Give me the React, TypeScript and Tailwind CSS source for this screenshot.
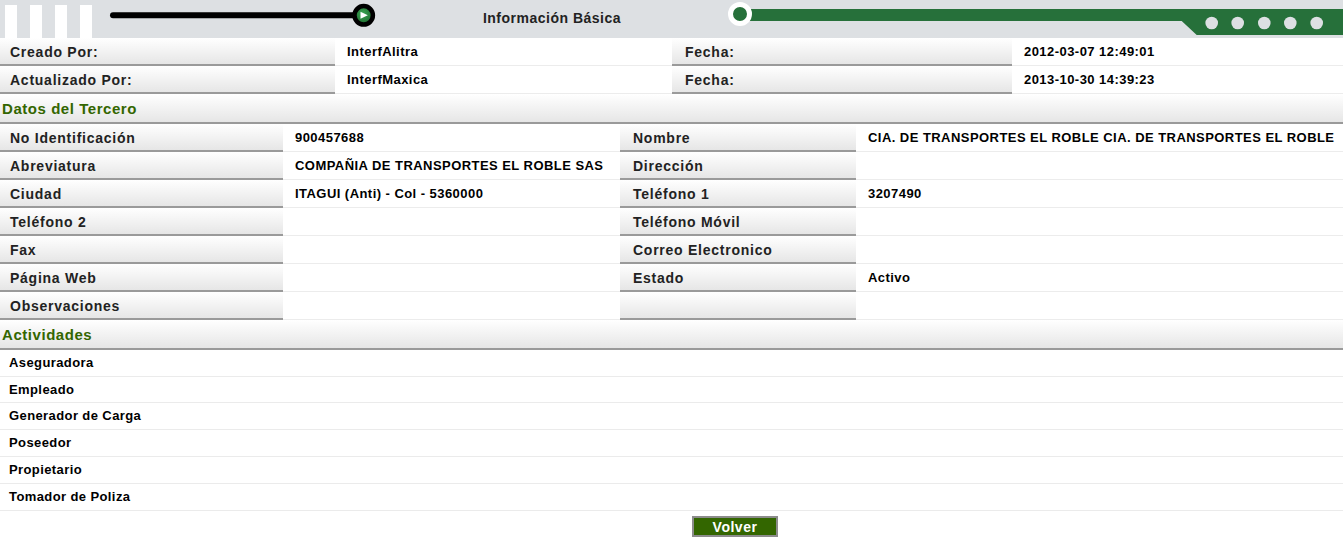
import React from 'react';

const font = { fontFamily: '"Liberation Sans", Arial, sans-serif' };

const labelCls =
  'flex h-[28px] items-center border-b-2 border-[#9a9a9a] bg-gradient-to-b from-white to-[#e6e6e6] pt-[2px] text-[14px] font-bold tracking-[0.75px] text-[#222]';
const valueCls =
  'h-[28px] border-b border-[#ececec] pl-[12px] pt-[6px] text-[13px] leading-[15px] font-bold tracking-[0.45px] text-black';
const sectionCls =
  'flex h-[30px] items-center border-b-2 border-[#9a9a9a] bg-gradient-to-b from-white to-[#e6e6e6] pl-[2px] pt-[2px] text-[15px] font-bold tracking-[0.55px] text-[#336600]';

function Header() {
  return (
    <div className="flex h-[38px] bg-[#dde0e3]">
      <div className="flex gap-[13px] pl-[5px] pt-[5px]">
        <div className="h-[33px] w-[12px] bg-white" />
        <div className="h-[33px] w-[12px] bg-white" />
        <div className="h-[33px] w-[12px] bg-white" />
        <div className="h-[33px] w-[12px] bg-white" />
      </div>
      <svg width="284" height="38" viewBox="0 0 284 38" className="shrink-0">
        <line x1="21" y1="15.3" x2="268" y2="15.3" stroke="#000" strokeWidth="6" strokeLinecap="round" />
        <defs>
          <radialGradient id="knob" cx="0.45" cy="0.4" r="0.6">
            <stop offset="0" stopColor="#3aa452" />
            <stop offset="1" stopColor="#1d6a2e" />
          </radialGradient>
        </defs>
        <circle cx="271.7" cy="15.3" r="9.2" fill="url(#knob)" stroke="#000" strokeWidth="4.5" />
        <polygon points="268.5,11.8 275.8,15.3 268.5,18.8" fill="#fff" />
      </svg>
      <div className="flex flex-1 items-center justify-center pb-[1px] text-[14px] font-bold tracking-[0.5px] text-[#222]">
        Información Básica
      </div>
      <svg width="615" height="38" viewBox="0 0 615 38" className="shrink-0">
        <polygon points="12,9 615,9 615,35 468.7,35 453.7,21 12,21" fill="#26703a" />
        <circle cx="12" cy="14" r="9.5" fill="#26703a" stroke="#fff" strokeWidth="5" />
        {[483.7, 509.7, 536.3, 562.3, 588.7].map((x) => (
          <circle key={x} cx={x} cy="23" r="6.3" fill="#dde0e3" />
        ))}
      </svg>
    </div>
  );
}

const audit = [
  ['Creado Por:', 'InterfAlitra', 'Fecha:', '2012-03-07 12:49:01'],
  ['Actualizado Por:', 'InterfMaxica', 'Fecha:', '2013-10-30 14:39:23'],
];

const tercero = [
  ['No Identificación', '900457688', 'Nombre', 'CIA. DE TRANSPORTES EL ROBLE CIA. DE TRANSPORTES EL ROBLE'],
  ['Abreviatura', 'COMPAÑIA DE TRANSPORTES EL ROBLE SAS', 'Dirección', ''],
  ['Ciudad', 'ITAGUI (Anti) - Col - 5360000', 'Teléfono 1', '3207490'],
  ['Teléfono 2', '', 'Teléfono Móvil', ''],
  ['Fax', '', 'Correo Electronico', ''],
  ['Página Web', '', 'Estado', 'Activo'],
  ['Observaciones', '', '', ''],
];

const actividades = [
  { name: 'Aseguradora', h: 'h-[27px]' },
  { name: 'Empleado', h: 'h-[26px]' },
  { name: 'Generador de Carga', h: 'h-[27px]' },
  { name: 'Poseedor', h: 'h-[27px]' },
  { name: 'Propietario', h: 'h-[27px]' },
  { name: 'Tomador de Poliza', h: 'h-[27px]' },
];

export default function App() {
  return (
    <div className="w-full bg-white" style={font}>
      <Header />

      <div className="grid grid-cols-[335px_337px_340px_1fr]">
        {audit.map(([l1, v1, l2, v2]) => (
          <React.Fragment key={l1}>
            <div className={`${labelCls} pl-[10px]`}>{l1}</div>
            <div className={valueCls}>{v1}</div>
            <div className={`${labelCls} pl-[13px]`}>{l2}</div>
            <div className={valueCls}>{v2}</div>
          </React.Fragment>
        ))}
      </div>

      <div className={sectionCls}>Datos del Tercero</div>

      <div className="grid grid-cols-[283px_337px_236px_1fr]">
        {tercero.map(([l1, v1, l2, v2]) => (
          <React.Fragment key={l1}>
            <div className={`${labelCls} pl-[10px]`}>{l1}</div>
            <div className={`${valueCls} whitespace-nowrap`}>{v1}</div>
            <div className={`${labelCls} pl-[13px]`}>{l2}</div>
            <div className={`${valueCls} whitespace-nowrap`}>{v2}</div>
          </React.Fragment>
        ))}
      </div>

      <div className={sectionCls}>Actividades</div>

      <div>
        {actividades.map((a) => (
          <div
            key={a.name}
            className={`flex ${a.h} items-center border-b border-[#ebebeb] pl-[9px] text-[13px] font-bold tracking-[0.4px] text-black`}
          >
            {a.name}
          </div>
        ))}
      </div>

      <div className="flex pb-[7px] pl-[692px] pt-[5px]">
        <button
          type="button"
          className="h-[21px] w-[86px] border-2 border-[#8c8c8c] bg-[#336600] text-[14px] leading-none font-bold tracking-[0.5px] text-white"
        >
          Volver
        </button>
      </div>
    </div>
  );
}
